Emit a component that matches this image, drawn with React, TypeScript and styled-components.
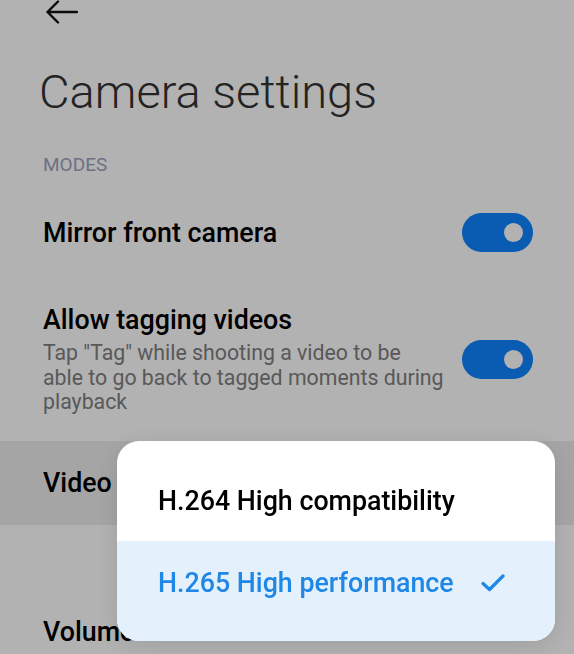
import React from 'react';
import styled, { createGlobalStyle } from 'styled-components';

const GlobalStyle = createGlobalStyle`
  html, body { margin: 0; padding: 0; overflow: hidden; background: #ffffff; }
  body { font-family: Roboto, "Noto Sans", "Liberation Sans", sans-serif; }
`;

// --- Page ---
const Page = styled.div`
  display: flex; flex-direction: column; padding: 0 41px 0 43px; height: 654px; box-sizing: border-box;
`;
const Header = styled.div` height: 24px; display: flex; align-items: center; padding-left: 3px; `;
const Title = styled.h1`
  margin: 40px 0 0 -4px; font-size: 47px; line-height: 55px; font-weight: 300; color: #333333;
`;
const SectionLabel = styled.div`
  margin: 35px 0 11px; font-size: 19px; line-height: 22px; color: #9ba2bf;
`;
const Row = styled.div<{ $pressed?: boolean }>`
  display: flex; align-items: center; justify-content: space-between; gap: 16px;
  padding: 26px 41px 26px 43px; margin: 0 -41px 0 -43px;
  background: ${p => (p.$pressed ? '#ededed' : 'transparent')};
`;
const TextBlock = styled.div` display: flex; flex-direction: column; max-width: 402px; `;
const RowTitle = styled.div` font-size: 26.8px; line-height: 32px; font-weight: 500; color: #000; `;
const RowDesc = styled.div` margin-top: 5px; font-size: 21.3px; line-height: 24.5px; color: #808080; `;
const Value = styled.div` display: flex; align-items: center; gap: 8px; font-size: 21px; color: #808080; `;
const Divider = styled.div` height: 1px; background: #e2e2e2; margin: 31px 0 34px -3px; `;

const ToggleTrack = styled.div<{ $on: boolean }>`
  width: 71px; height: 39px; border-radius: 20px; flex-shrink: 0; box-sizing: border-box;
  background: ${p => (p.$on ? '#0d84ff' : '#e0e0e0')};
  display: flex; align-items: center; justify-content: ${p => (p.$on ? 'flex-end' : 'flex-start')};
  padding: 0 10px;
`;
const Knob = styled.div` width: 19px; height: 19px; border-radius: 50%; background: #ffffff; `;

// --- Dim + popup ---
const Scrim = styled.div` position: fixed; inset: 0; background: rgba(0, 0, 0, 0.3); z-index: 10; `;
const Popup = styled.div`
  position: fixed; left: 117px; top: 441px; width: 438px; z-index: 20;
  background: #ffffff; border-radius: 22px; overflow: hidden; padding-top: 20px;
  box-shadow: 0 4px 24px rgba(0, 0, 0, 0.12);
`;
const Option = styled.div<{ $selected?: boolean }>`
  height: 80px; display: flex; align-items: center; justify-content: space-between;
  padding: 0 50px 0 41px; font-size: 26.8px; line-height: 32px; font-weight: 500;
  color: ${p => (p.$selected ? '#1f87e5' : '#000000')};
  background: ${p => (p.$selected ? '#e4f0fc' : 'transparent')};
  &:last-child { height: 100px; padding-bottom: 16px; box-sizing: border-box; }
`;

const Toggle = ({ on }: { on: boolean }) => (
  <ToggleTrack $on={on}><Knob /></ToggleTrack>
);

const Chevron = () => (
  <svg width="10" height="18" viewBox="0 0 10 18" fill="none" stroke="#9a9a9a" strokeWidth="2">
    <path d="M2 2 L8 9 L2 16" />
  </svg>
);

const App: React.FC = () => (
  <>
    <GlobalStyle />
    <Page>
      <Header>
        <svg width="32" height="24" viewBox="0 0 32 24" fill="none" stroke="#111" strokeWidth="2.4" strokeLinecap="round" strokeLinejoin="round">
          <path d="M12 1.5 L1.5 12 L12 22.5 M1.5 12 H31" />
        </svg>
      </Header>
      <Title>Camera settings</Title>
      <SectionLabel>MODES</SectionLabel>
      <Row>
        <TextBlock><RowTitle>Mirror front camera</RowTitle></TextBlock>
        <Toggle on />
      </Row>
      <Row>
        <TextBlock>
          <RowTitle>Allow tagging videos</RowTitle>
          <RowDesc>Tap "Tag" while shooting a video to be able to go back to tagged moments during playback</RowDesc>
        </TextBlock>
        <Toggle on />
      </Row>
      <Row $pressed>
        <RowTitle>Video encoder</RowTitle>
        <Value>H.265<Chevron /></Value>
      </Row>
      <Divider />
      <Row>
        <RowTitle>Volume buttons function</RowTitle>
        <Value>Shutter<Chevron /></Value>
      </Row>
    </Page>
    <Scrim />
    <Popup>
      <Option>H.264 High compatibility</Option>
      <Option $selected>
        H.265 High performance
        <svg width="24" height="18" viewBox="0 0 24 18" fill="none" stroke="#1f87e5" strokeWidth="3.2" strokeLinecap="round" strokeLinejoin="round">
          <path d="M2 9.5 L8.5 15.5 L22 2" />
        </svg>
      </Option>
    </Popup>
  </>
);

export default App;
